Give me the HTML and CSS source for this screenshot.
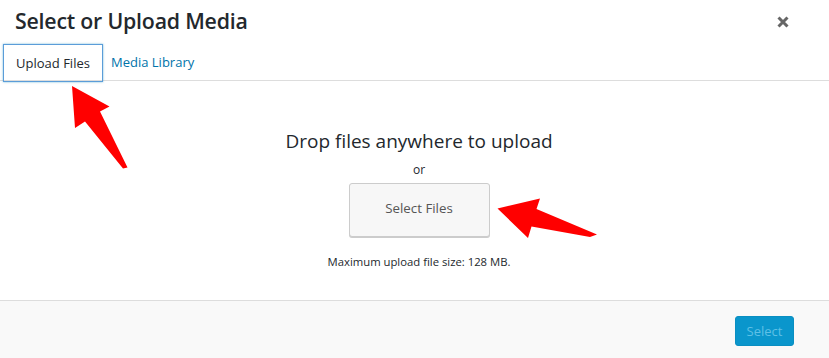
FILE: index.html
```html
<!DOCTYPE html>
<html lang="en">
<head>
<meta charset="utf-8">
<title>Select or Upload Media</title>
<link rel="stylesheet" href="styles.css">
</head>
<body>
<div class="modal">
  <header class="modal-header">
    <h1 class="modal-title">Select or Upload Media</h1>
    <button class="close-btn" aria-label="Close">
      <svg width="14" height="14" viewBox="0 0 14 14"><path d="M2.5 2.5 L11.5 11.5 M11.5 2.5 L2.5 11.5" stroke="#666" stroke-width="3" stroke-linecap="butt"/></svg>
    </button>
  </header>
  <nav class="tabs">
    <a class="tab tab-active">Upload Files</a>
    <a class="tab">Media Library</a>
  </nav>
  <main class="uploader">
    <h2 class="drop-title">Drop files anywhere to upload</h2>
    <p class="or">or</p>
    <button class="select-files">Select Files</button>
    <p class="max-size">Maximum upload file size: 128 MB.</p>
  </main>
  <footer class="modal-footer">
    <button class="select-btn">Select</button>
  </footer>
  <svg class="arrows" width="829" height="358" viewBox="0 0 829 358">
    <polygon fill="#ff0000" points="72,86 109.5,106.5 100,111.5 127.5,167.5 123,168.5 85,121.5 75,128"/>
    <polygon fill="#ff0000" points="497.5,208.5 540,198.5 536.5,209 597,234.5 590,237 531.5,226.5 528,238"/>
  </svg>
</div>
</body>
</html>
```
FILE: styles.css
```css
* { box-sizing: border-box; }
html, body { margin: 0; padding: 0; }
body {
  width: 829px;
  height: 358px;
  overflow: hidden;
  background: #fff;
  font-family: "Open Sans", "Noto Sans", sans-serif;
  color: #23282d;
}
.modal {
  position: relative;
  width: 829px;
  height: 358px;
  display: flex;
  flex-direction: column;
}
.modal-header {
  height: 44px;
  display: flex;
  align-items: center;
  justify-content: space-between;
  padding: 0 0 0 15px;
}
.modal-title {
  margin: 0;
  font-size: 21.3px;
  font-weight: 600;
  color: #23282d;
  letter-spacing: -0.2px;
  line-height: 1;
  padding-bottom: 2px;
}
.close-btn {
  border: 0;
  background: transparent;
  width: 44px;
  height: 44px;
  margin-right: 24px;
  padding: 0;
  display: flex;
  align-items: center;
  justify-content: center;
}
.tabs {
  height: 37px;
  display: flex;
  align-items: stretch;
  padding-left: 3px;
  border-bottom: 1px solid #ddd;
}
.tab {
  display: flex;
  align-items: center;
  padding: 0 8px 0 7px;
  font-size: 13px;
  color: #0073aa;
  border: 1px solid transparent;
}
.tab-active {
  color: #23282d;
  width: 100px;
  padding: 0;
  justify-content: center;
  border: 1px solid #5b9dd9;
  box-shadow: 0 0 2px rgba(30, 140, 190, 0.6);
  height: 38px;
}
.uploader {
  height: 219px;
  display: flex;
  flex-direction: column;
  align-items: center;
  padding-left: 9px;
}
.drop-title {
  margin: 48px 0 0;
  font-size: 19px;
  font-weight: 400;
  line-height: 24px;
  color: #23282d;
}
.or {
  margin: 9px 0 0;
  font-size: 12px;
  line-height: 16px;
  color: #23282d;
}
.select-files {
  margin-top: 5px;
  width: 141px;
  height: 54px;
  padding: 0 0 4px;
  background: #f7f7f7;
  border: 1px solid #ccc;
  border-radius: 3px;
  box-shadow: 0 1px 0 #ccc;
  font-family: inherit;
  font-size: 13.3px;
  color: #555;
}
.max-size {
  margin: 17px 0 0;
  font-size: 11.3px;
  line-height: 16px;
  color: #23282d;
}
.modal-footer {
  flex: 1;
  background: #f9f9f9;
  border-top: 1px solid #ddd;
  display: flex;
  justify-content: flex-end;
  align-items: flex-start;
  padding: 15px 35px 0 0;
}
.select-btn {
  width: 59px;
  height: 30px;
  background: #0a96cc;
  border: 1px solid #0a8fc2;
  border-radius: 3px;
  color: #5ec0e6;
  font-family: inherit;
  font-size: 13px;
  padding: 0;
}
.arrows {
  position: absolute;
  left: 0;
  top: 0;
  pointer-events: none;
}
```
